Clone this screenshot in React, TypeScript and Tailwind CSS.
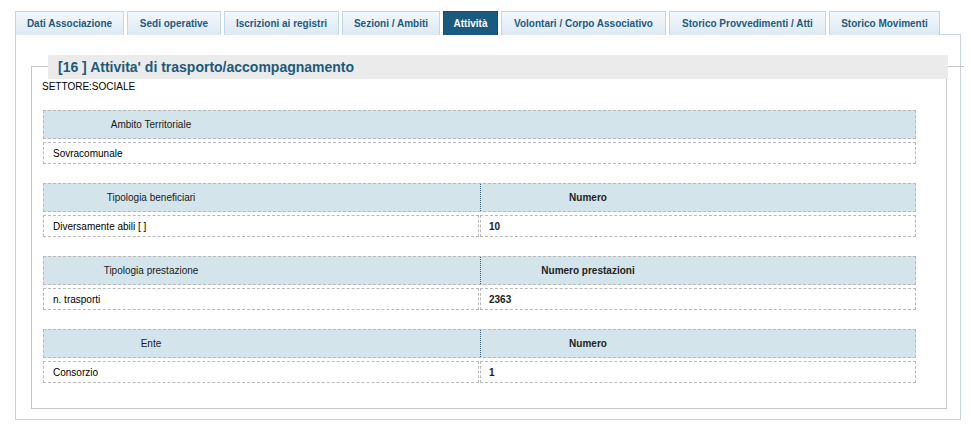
import React from "react";

const tabs = [
  { label: "Dati Associazione", w: "w-[109px]" },
  { label: "Sedi operative", w: "w-[94px]" },
  { label: "Iscrizioni ai registri", w: "w-[115px]" },
  { label: "Sezioni / Ambiti", w: "w-[98px]" },
  { label: "Attività", w: "w-[55px]", active: true },
  { label: "Volontari / Corpo Associativo", w: "w-[165px]" },
  { label: "Storico Provvedimenti / Atti", w: "w-[157px]" },
  { label: "Storico Movimenti", w: "w-[111px]" },
];

function HeaderTwo({ a, b }: { a: string; b: string }) {
  return (
    <div className="flex h-[29px] w-[873px] border border-dashed border-[#b9b9b9] bg-[#d3e5eb]">
      <div className="w-[436px] flex items-center">
        <div className="w-[214px] text-center text-[10px] text-[#1a1a1a]">{a}</div>
      </div>
      <div className="flex-1 flex items-center border-l border-dotted border-[#3f5f75]">
        <div className="w-[214px] text-center text-[10px] font-bold text-[#222]">{b}</div>
      </div>
    </div>
  );
}

function DataTwo({ a, b }: { a: string; b: string }) {
  return (
    <div className="mt-[3px] flex h-[22px] w-[873px] gap-[1px]">
      <div className="w-[436px] flex items-center border border-dashed border-[#b9b9b9] pl-[9px] text-[10px] text-black">
        {a}
      </div>
      <div className="w-[436px] flex items-center border border-dashed border-[#b9b9b9] pl-[8px] text-[10px] font-bold text-[#222]">
        {b}
      </div>
    </div>
  );
}

export default function App() {
  return (
    <div className="w-[971px] h-[426px] bg-white font-['Liberation_Sans',Arial,sans-serif] overflow-hidden">
      <div className="pt-[11px] pl-[15px]">
        <div className="flex w-[946px] h-[24px] gap-[3px]">
          {tabs.map((t) =>
            t.active ? (
              <div
                key={t.label}
                className={`${t.w} h-[24px] flex items-center justify-center border border-b-0 border-[#16506f] bg-[#1b5a80] text-[10px] font-bold text-white`}
              >
                {t.label}
              </div>
            ) : (
              <div
                key={t.label}
                className={`${t.w} h-[24px] flex items-center justify-center border border-b-0 border-[#c3d6e4] bg-linear-to-b from-[#f3f8fc] to-[#dde9f3] text-[10px] font-bold text-[#1d5b80]`}
              >
                {t.label}
              </div>
            )
          )}
          <div className="flex-1 -ml-[3px] h-[24px] border-b border-[#c9d9e0]" />
        </div>
        <div className="w-[946px] border-l border-r border-[#c4d4dc] pt-[20px] pl-[15px] pb-[10px]">
          <div className="w-[933px]">
            <div className="flex h-[24px]">
              <div className="w-[17px] mt-[11px] h-[13px] border-t border-l border-[#c6c6c6]" />
              <div className="w-[900px] h-[24px] bg-[#ebebeb] flex items-center pl-[10px] text-[14px] font-bold text-[#1c5a7a]">
                [16 ] Attivita' di trasporto/accompagnamento
              </div>
              <div className="w-[16px] mt-[11px] border-t border-[#c6c6c6]" />
            </div>
            <div className="w-[916px] h-[330px] border border-t-0 border-[#c6c6c6]">
              <div className="pl-[10px] pt-[2px] text-[10px] leading-[12px] text-black">SETTORE:SOCIALE</div>
              <div className="ml-[11px] mt-[17px] flex flex-col gap-[19px]">
                <div>
                  <div className="flex items-center h-[29px] w-[873px] border border-dashed border-[#b9b9b9] bg-[#d3e5eb]">
                    <div className="w-[214px] text-center text-[10px] text-[#1a1a1a]">Ambito Territoriale</div>
                  </div>
                  <div className="mt-[3px] flex items-center h-[22px] w-[873px] border border-dashed border-[#b9b9b9] pl-[9px] text-[10px] text-black">
                    Sovracomunale
                  </div>
                </div>
                <div>
                  <HeaderTwo a="Tipologia beneficiari" b="Numero" />
                  <DataTwo a="Diversamente abili [ ]" b="10" />
                </div>
                <div>
                  <HeaderTwo a="Tipologia prestazione" b="Numero prestazioni" />
                  <DataTwo a="n. trasporti" b="2363" />
                </div>
                <div>
                  <HeaderTwo a="Ente" b="Numero" />
                  <DataTwo a="Consorzio" b="1" />
                </div>
              </div>
            </div>
          </div>
        </div>
        <div className="w-[946px] h-px bg-[#c4d4dc]" />
      </div>
    </div>
  );
}
